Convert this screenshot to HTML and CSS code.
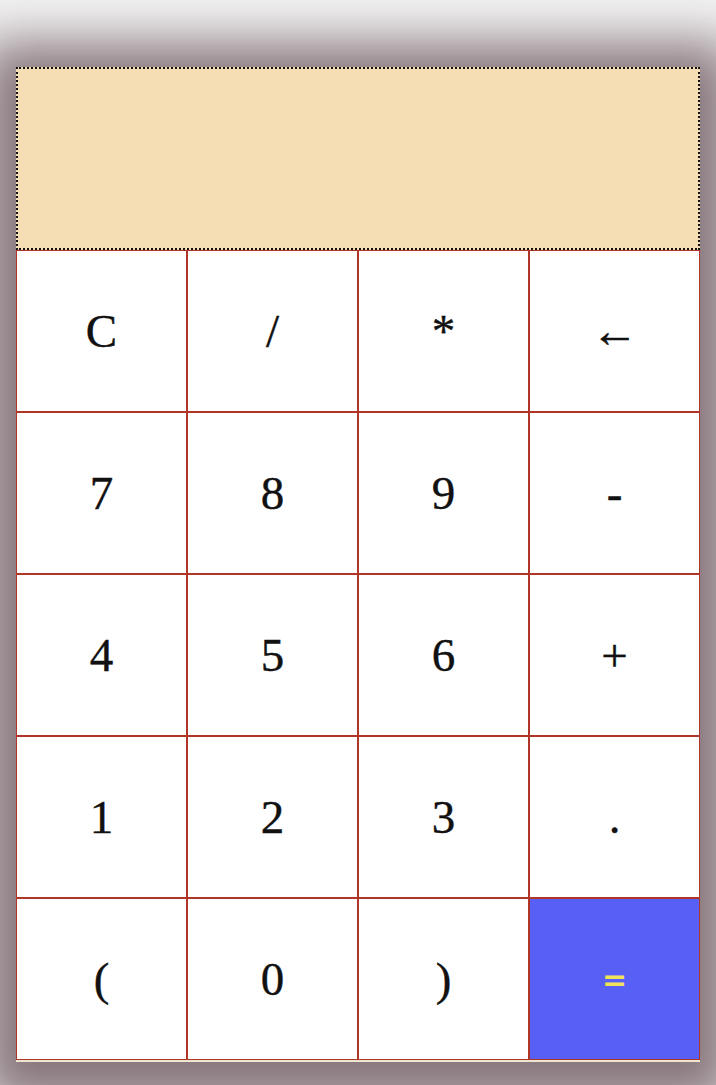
FILE: index.html
```html
<!DOCTYPE html>
<html>
<head>
<meta charset="utf-8">
<link rel="stylesheet" href="styles.css">
</head>
<body>
<div class="calc">
  <div class="display"></div>
  <div class="keys">
    <button class="key">C</button>
    <button class="key">/</button>
    <button class="key">*</button>
    <button class="key">&larr;</button>
    <button class="key">7</button>
    <button class="key">8</button>
    <button class="key">9</button>
    <button class="key">-</button>
    <button class="key">4</button>
    <button class="key">5</button>
    <button class="key">6</button>
    <button class="key">+</button>
    <button class="key">1</button>
    <button class="key">2</button>
    <button class="key">3</button>
    <button class="key">.</button>
    <button class="key">(</button>
    <button class="key">0</button>
    <button class="key">)</button>
    <button class="key equal">=</button>
  </div>
</div>
</body>
</html>
```
FILE: styles.css
```css
html, body {
  margin: 0;
  padding: 0;
  height: 100%;
  background: #f4f4f4;
  overflow: hidden;
}
body {
  padding-top: 67px;
  box-sizing: border-box;
}
.calc {
  width: 684px;
  margin: 0 auto;
  box-shadow: 0 10px 50px 35px rgb(135, 118, 124);
  background: #fff;
  border-bottom: 2px solid #efe6cf;
}
.display {
  height: 179px;
  background: #f5deb3;
  border: 2px dotted #111;
}
.keys {
  display: grid;
  grid-template-columns: repeat(4, 1fr);
  grid-auto-rows: 162px;
  background: #fff;
}
.key {
  background: #fff;
  border: 1px solid #b03527;
  margin: 0;
  padding: 0;
  font-family: "Liberation Serif", serif;
  font-size: 47px;
  color: #111;
  -webkit-text-stroke: 0.4px #111;
}
.key.equal {
  background: #585ff4;
  color: #f0e35a;
  -webkit-text-stroke: 0;
  font-family: "DejaVu Sans", sans-serif;
  font-weight: bold;
  font-size: 30px;
}
```
